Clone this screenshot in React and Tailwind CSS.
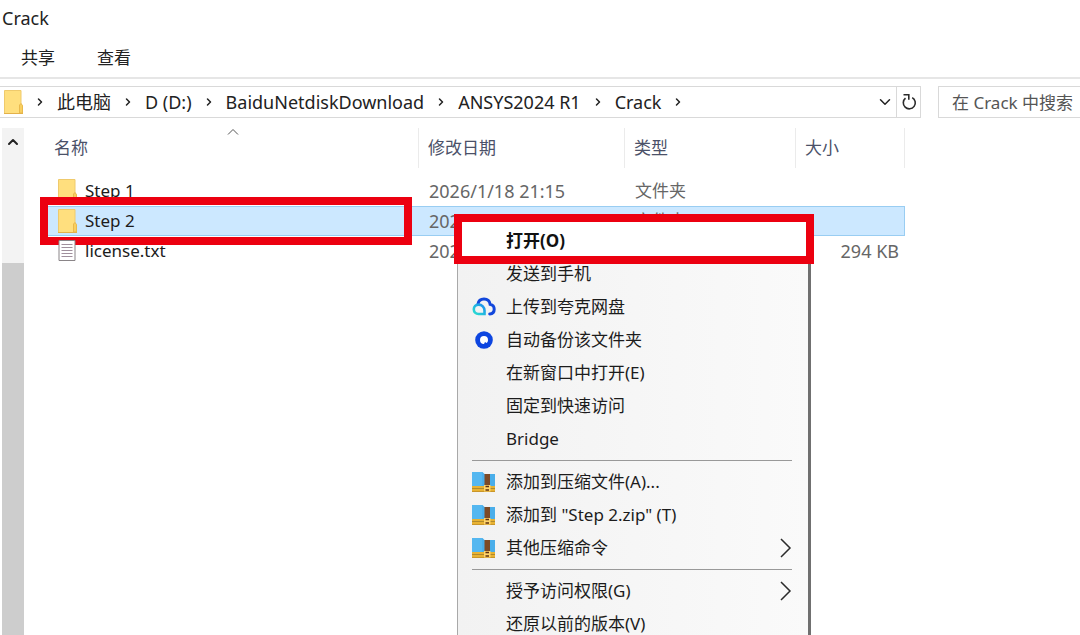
import { ChevronDown, ChevronRight, ChevronUp } from "lucide-react";

const tabs = ["共享", "查看"];

const crumbs = ["此电脑", "D (D:)", "BaiduNetdiskDownload", "ANSYS2024 R1", "Crack"];

const files = [
  { name: "Step 1", date: "2026/1/18 21:15", type: "文件夹", size: "", kind: "folder" },
  { name: "Step 2", date: "2026/1/18 21:15", type: "文件夹", size: "", kind: "folder", selected: true },
  { name: "license.txt", date: "2026/1/18 21:15", type: "文本文档", size: "294 KB", kind: "text" },
];

const menuGroups = [
  [
    { label: "打开(O)", primary: true },
    { label: "发送到手机" },
    { label: "上传到夸克网盘", icon: "cloud" },
    { label: "自动备份该文件夹", icon: "backup" },
    { label: "在新窗口中打开(E)" },
    { label: "固定到快速访问" },
    { label: "Bridge" },
  ],
  [
    { label: "添加到压缩文件(A)...", icon: "zip" },
    { label: '添加到 "Step 2.zip" (T)', icon: "zip" },
    { label: "其他压缩命令", icon: "zip", submenu: true },
  ],
  [
    { label: "授予访问权限(G)", submenu: true },
    { label: "还原以前的版本(V)" },
  ],
];

function FolderIcon() {
  return (
    <svg width="19" height="24" viewBox="0 0 19 24" className="shrink-0">
      <path d="M0.5 0.5H17v14l1.5 1.5v7.5H0.5z" fill="#ffdf7e" stroke="#efca6c" />
      <path d="M15.500 23v-8l1.500-1.500 1.500 2V23z" fill="#f8cf60" stroke="#e9b94c" />
      <path d="M0 23.500h19" stroke="#e3b14a" />
    </svg>
  );
}

function TextFileIcon() {
  return (
    <svg width="19" height="22" viewBox="0 0 19 22" className="shrink-0">
      <path d="M1 0.5h16v20H1z" fill="#fff" stroke="#8a8588" />
      <path d="M3.5 4.5h11M3.5 7.5h11M3.5 10.5h11M3.5 13.5h11M3.5 16.5h11" stroke="#a08f9c" />
    </svg>
  );
}

function CloudIcon() {
  return (
    <svg width="24" height="20" viewBox="0 0 24 20" fill="none" strokeWidth="3" strokeLinecap="round">
      <defs>
        <linearGradient id="cloud-left" x1="0" y1="1" x2="1" y2="0">
          <stop offset="0" stopColor="#2ae0d0" />
          <stop offset="1" stopColor="#1a8cf0" />
        </linearGradient>
      </defs>
      <path d="M6 7C6.5 4 9 2 12 2c3.200 0 5.700 2.200 6.200 5.400 2.400.5 4 2.300 4 4.800 0 2.600-1.800 4.600-4.500 4.800" stroke="#1247dc" />
      <path d="M12.500 17H6.500C3.700 17 1.800 15 1.800 12.300 1.800 9.600 3.800 7.600 6.500 7.600c3.400 0 6 2.600 6 6z" stroke="url(#cloud-left)" strokeWidth="2.600" />
    </svg>
  );
}

function BackupIcon() {
  return (
    <svg width="24" height="20" viewBox="0 0 24 20">
      <circle cx="12" cy="10" r="8.800" fill="#0d45e0" />
      <path d="M12 6a4 4 0 1 0 0 8l1-2 1.500 1c1-.7 1.500-1.700 1.500-3a4 4 0 0 0-4-4z" fill="#fff" />
    </svg>
  );
}

function ZipIcon() {
  return (
    <svg width="24" height="20" viewBox="0 0 24 20">
      <path d="M0 0h10.500l2 2H23v13H0z" fill="#4aaeea" />
      <path d="M0 0h10v15H0z" fill="#5bbcf3" opacity="0.6" />
      <path d="M12.500 2h5.500v13h-5.500z" fill="#7d4a26" />
      <path d="M0 14h23v6H0z" fill="#e8b233" />
      <path d="M0 16.500h23" stroke="#b08a2c" />
      <path d="M0 19.500h23" stroke="#c9962a" />
      <path d="M12 13h6.500v6.500H12z" fill="#ffd56b" />
      <path d="M13.500 14.500h3.500M13.500 18h3.500" stroke="#5f3010" strokeWidth="1.500" />
    </svg>
  );
}

function RefreshIcon() {
  return (
    <svg width="16" height="18" viewBox="0 0 16 18" fill="none" stroke="#2b2b2b" strokeWidth="1.600">
      <path d="M4.500 5.200a6 6 0 1 0 6.700-.6" />
      <path d="M2.500 1.800h5.300v5" />
    </svg>
  );
}

const icons = { cloud: CloudIcon, backup: BackupIcon, zip: ZipIcon };

function MenuItem({ item }) {
  const Icon = icons[item.icon];

  return (
    <li role="none" className="relative">
      {item.primary && (
        <span className="pointer-events-none absolute -left-1 -right-[6px] -top-[10px] -bottom-[7px] border-8 border-[#ec0010] bg-white" />
      )}
      <button
        role="menuitem"
        className={`relative flex h-[33px] w-full items-center pl-[14px] pr-4 text-left ${
          item.primary ? "font-bold text-[#111]" : "text-[#1c1c1c]"
        }`}
      >
        <span className="mr-[10px] flex w-6 shrink-0 justify-center">{Icon && <Icon />}</span>
        <span className="flex-1 whitespace-nowrap">{item.label}</span>
        {item.submenu && (
          <svg width="12" height="20" viewBox="0 0 12 20" fill="none" stroke="#2b2b2b" strokeWidth="1.500">
            <path d="M1 1l9 9-9 9" />
          </svg>
        )}
      </button>
    </li>
  );
}

function ContextMenu() {
  return (
    <div
      role="menu"
      className="absolute left-[433px] top-[96px] w-[354px] border-l border-r-[3px] border-l-[#a9a9a9] border-r-[#707070] bg-gradient-to-r from-[#f2f2f2] to-[#fafafa]"
    >
      {menuGroups.map((group, index) => (
        <div key={index}>
          {index > 0 && (
            <div className="flex h-[10px] items-center pl-[14px] pr-4">
              <hr className="w-full border-[#999]" />
            </div>
          )}
          <ul role="none">
            {group.map((item) => (
              <MenuItem key={item.label} item={item} />
            ))}
          </ul>
        </div>
      ))}
    </div>
  );
}

function FileRow({ file }) {
  const border = file.selected ? "border-y border-[#99cdf2] bg-[#cce8ff]" : "";

  return (
    <tr className="h-[30px] text-[#666]">
      <td className={`relative pl-[10px] text-[#1c1c1c] ${border}`}>
        <div className="flex h-7 items-center gap-2">
          {file.kind === "folder" ? <FolderIcon /> : <TextFileIcon />}
          <span>{file.name}</span>
        </div>
        {file.selected && (
          <span className="pointer-events-none absolute -left-2 right-[7px] -top-[10px] -bottom-[10px] border-8 border-[#ec0010]" />
        )}
      </td>
      <td className={`pl-[10px] text-[18px] ${border}`}>{file.date}</td>
      <td className={`pl-[10px] ${border}`}>{file.type}</td>
      <td className={`pr-[6px] text-right text-[18px] ${border} ${file.selected ? "border-r" : ""}`}>{file.size}</td>
    </tr>
  );
}

export default function App() {
  return (
    <div className="flex h-screen flex-col overflow-hidden bg-white font-['Noto_Sans','Noto_Sans_CJK_SC',sans-serif] text-[17px] leading-6 text-[#222]">
      {/* Title and ribbon tabs */}
      <h1 className="px-[2px] pt-[6px] text-[18px]">Crack</h1>
      <nav className="flex gap-[42px] border-b-2 border-[#e6e6e6] px-[21px] pt-4 pb-[7px]">
        {tabs.map((tab) => (
          <button key={tab}>{tab}</button>
        ))}
      </nav>

      {/* Address bar */}
      <div className="flex gap-[17px] pt-[7px]">
        <div className="flex h-8 flex-1 items-center border border-l-0 border-[#d9d9d9]">
          <div className="ml-1">
            <FolderIcon />
          </div>
          <ChevronRight size={12} strokeWidth={3} className="mx-[11px] shrink-0" />
          {crumbs.map((crumb) => (
            <div key={crumb} className="flex items-center">
              <button className="whitespace-nowrap text-[18px]">{crumb}</button>
              <ChevronRight size={12} strokeWidth={3} className="mx-[11px] shrink-0" />
            </div>
          ))}
          <button aria-label="历史记录" className="ml-auto px-[2px]">
            <ChevronDown size={18} strokeWidth={2} />
          </button>
          <button aria-label="刷新" className="flex h-full w-6 items-center justify-center border-l border-[#d9d9d9]">
            <RefreshIcon />
          </button>
        </div>
        <input
          type="text"
          aria-label="搜索"
          placeholder="在 Crack 中搜索"
          className="h-8 w-[142px] border border-r-0 border-[#d9d9d9] pl-[13px] outline-none placeholder:text-[#555]"
        />
      </div>

      <div className="flex min-h-0 flex-1 pt-[10px]">
        {/* Scroll bar of the navigation pane */}
        <div className="ml-[2px] flex w-[22px] flex-col bg-[#f3f3f3]">
          <button aria-label="向上滚动" className="flex h-7 items-center justify-center">
            <ChevronUp size={16} strokeWidth={3} />
          </button>
          <div className="mt-[107px] flex-1 bg-[#cdcdcd]" />
        </div>

        <main className="relative flex-1 pl-6">
          <table className="table-fixed border-separate border-spacing-0">
            <colgroup>
              <col className="w-[371px]" />
              <col className="w-[206px]" />
              <col className="w-[171px]" />
              <col className="w-[109px]" />
            </colgroup>
            <thead>
              <tr className="h-10 text-left text-[#4b5168] *:border-r *:border-[#ebebeb] *:font-normal">
                <th className="relative pl-[6px]">
                  名称
                  <svg
                    width="12"
                    height="7"
                    viewBox="0 0 12 7"
                    fill="none"
                    stroke="#555"
                    className="absolute left-1/2 top-0 -translate-x-1/2"
                  >
                    <path d="M1 6.500l5-5 5 5" />
                  </svg>
                </th>
                <th className="pl-[9px]">修改日期</th>
                <th className="pl-[9px]">类型</th>
                <th className="pl-[9px]">大小</th>
              </tr>
            </thead>
            <tbody className="before:block before:h-2">
              {files.map((file) => (
                <FileRow key={file.name} file={file} />
              ))}
            </tbody>
          </table>
          <ContextMenu />
        </main>
      </div>
    </div>
  );
}
